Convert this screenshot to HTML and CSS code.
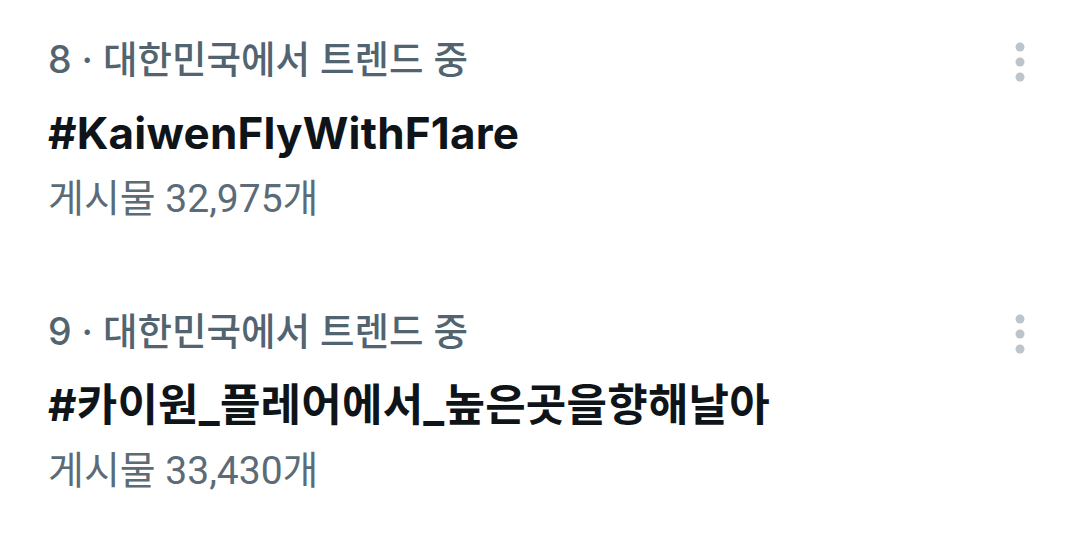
FILE: index.html
```html
<!DOCTYPE html>
<html lang="ko">
<head>
    <meta charset="UTF-8">
    <meta name="viewport" content="width=device-width, initial-scale=1.0">
    <title>트렌드</title>
    <link rel="stylesheet" href="styles.css">
</head>
<body>

    <div class="trends">
        <div class="trend">
            <div class="trend-text">
                <div class="trend-meta">8 · 대한민국에서 트렌드 중</div>
                <div class="trend-name">#KaiwenFlyWithF1are</div>
                <div class="trend-count">게시물 32,975개</div>
            </div>
            <button class="more-btn" aria-label="더 보기">
                <svg viewBox="0 0 10 40" width="10" height="40"><circle cx="5" cy="5" r="4.5"/><circle cx="5" cy="20" r="4.5"/><circle cx="5" cy="35" r="4.5"/></svg>
            </button>
        </div>
        <div class="trend">
            <div class="trend-text">
                <div class="trend-meta">9 · 대한민국에서 트렌드 중</div>
                <div class="trend-name">#카이원_플레어에서_높은곳을향해날아</div>
                <div class="trend-count">게시물 33,430개</div>
            </div>
            <button class="more-btn" aria-label="더 보기">
                <svg viewBox="0 0 10 40" width="10" height="40"><circle cx="5" cy="5" r="4.5"/><circle cx="5" cy="20" r="4.5"/><circle cx="5" cy="35" r="4.5"/></svg>
            </button>
        </div>
    </div>

</body>
</html>
```

FILE: styles.css
```css
body { margin: 0; background: #fff; font-family: Inter, "Noto Sans CJK KR", sans-serif; }
.trends { display: flex; flex-direction: column; }
.trend { display: flex; justify-content: space-between; align-items: flex-start; padding: 30px 55px 43px 48px; }
.trend-text { display: flex; flex-direction: column; }
.trend-meta { color: #536471; font-size: 37.5px; font-weight: 500; line-height: 60px; }
.trend-name { color: #0f1419; font-size: 44px; font-weight: 700; line-height: 66px; margin-top: 10px; letter-spacing: 0.2px; }
.trend-count { color: #5b6b77; font-size: 39px; font-weight: 400; line-height: 60px; margin-top: 3px; font-family: Roboto, "Noto Sans CJK KR", sans-serif; }
.more-btn { background: none; border: none; padding: 0; margin-top: 12px; cursor: pointer; }
.more-btn svg { display: block; fill: #bcc5cc; }
```
